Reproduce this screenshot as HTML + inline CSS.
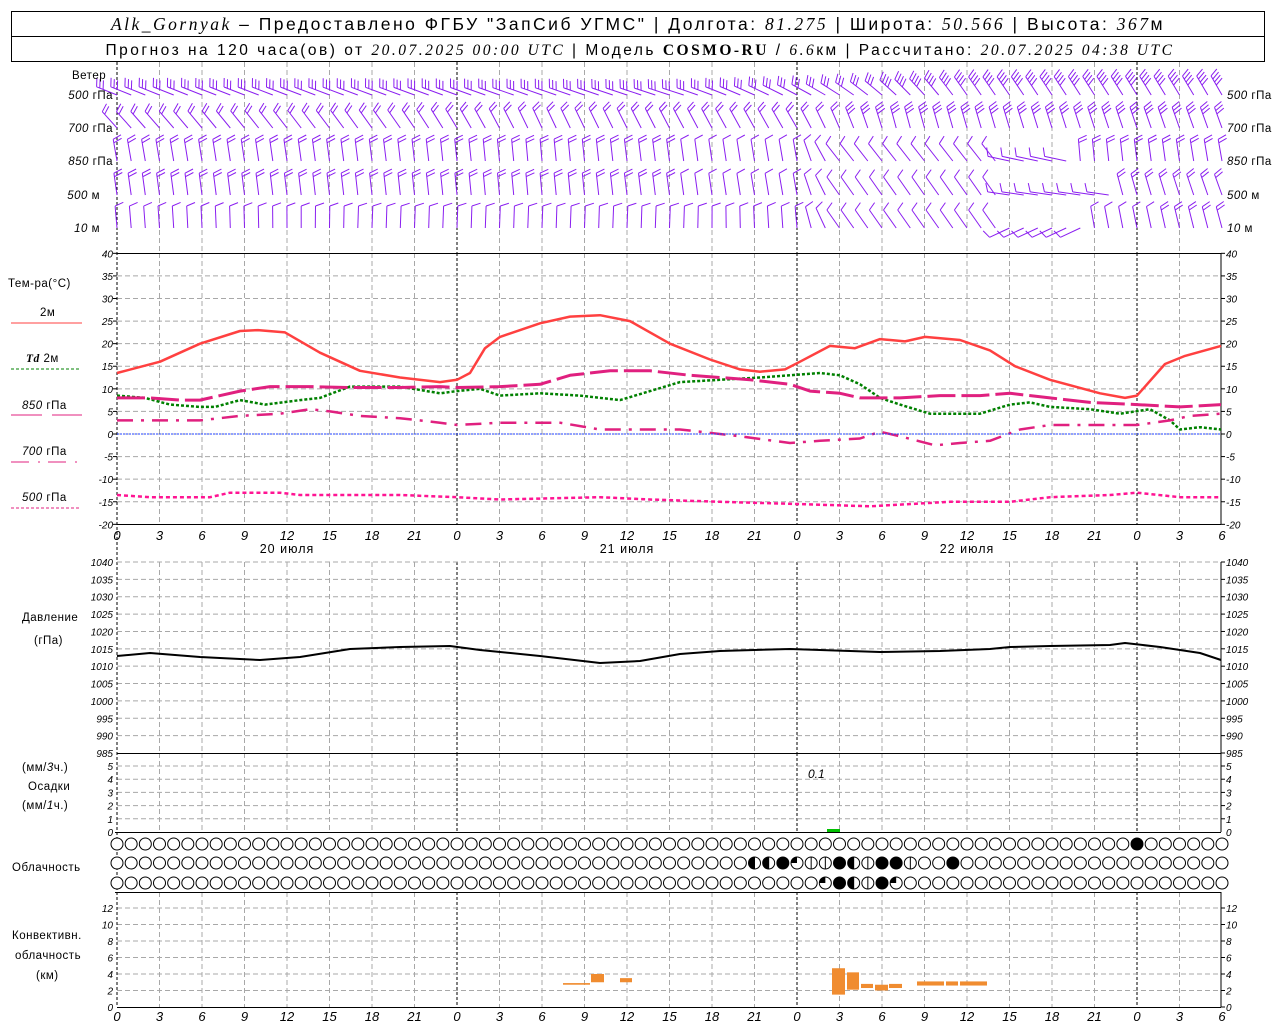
<!DOCTYPE html>
<html><head><meta charset="utf-8"><style>
html,body{margin:0;padding:0;background:#fff;width:1280px;height:1024px;overflow:hidden}
svg{display:block}
text{font-family:"Liberation Sans","DejaVu Sans",sans-serif;fill:#000}
.n{font-style:italic;font-size:10px;font-family:"Liberation Sans",sans-serif}
.l{font-size:11.5px;letter-spacing:0.5px}
</style></head><body>
<svg id="s" width="1280" height="1024" xmlns="http://www.w3.org/2000/svg">
<rect x="11.5" y="11.5" width="1253" height="50" fill="none" stroke="#000"/>
<line x1="11" y1="36.5" x2="1265" y2="36.5" stroke="#000"/>
<text x="638" y="30" text-anchor="middle" font-size="17.5" style="letter-spacing:2.5px"><tspan font-family="Liberation Serif,serif" font-style="italic">Alk_Gornyak</tspan> – Предоставлено ФГБУ "ЗапСиб УГМС" | Долгота: <tspan font-family="Liberation Serif,serif" font-style="italic">81.275</tspan> | Широта: <tspan font-family="Liberation Serif,serif" font-style="italic">50.566</tspan> | Высота: <tspan font-family="Liberation Serif,serif" font-style="italic">367</tspan>м</text>
<text x="640" y="55" text-anchor="middle" font-size="15.5" style="letter-spacing:2.5px">Прогноз на 120 часа(ов) от <tspan font-family="Liberation Serif,serif" font-style="italic">20.07.2025 00:00 UTC</tspan>  | Модель <tspan font-family="Liberation Serif,serif" font-weight="bold">COSMO-RU</tspan> / <tspan font-family="Liberation Serif,serif" font-style="italic">6.6</tspan>км | Рассчитано: <tspan font-family="Liberation Serif,serif" font-style="italic">20.07.2025 04:38 UTC</tspan></text>
<g id="g"></g>
<text x="72" y="79" class="l">Ветер</text>
<text x="113" y="99" class="l" text-anchor="end"><tspan font-style="italic">500</tspan> гПа</text>
<text x="113" y="132" class="l" text-anchor="end"><tspan font-style="italic">700</tspan> гПа</text>
<text x="113" y="165" class="l" text-anchor="end"><tspan font-style="italic">850</tspan> гПа</text>
<text x="100" y="199" class="l" text-anchor="end"><tspan font-style="italic">500</tspan> м</text>
<text x="100" y="232" class="l" text-anchor="end"><tspan font-style="italic">10</tspan>   м</text>
<text x="1227" y="99" class="l"><tspan font-style="italic">500</tspan> гПа</text>
<text x="1227" y="132" class="l"><tspan font-style="italic">700</tspan> гПа</text>
<text x="1227" y="165" class="l"><tspan font-style="italic">850</tspan> гПа</text>
<text x="1227" y="199" class="l"><tspan font-style="italic">500</tspan> м</text>
<text x="1227" y="232" class="l"><tspan font-style="italic">10</tspan>   м</text>

<text x="8" y="287" class="l">Тем-ра(°С)</text>
<text x="40" y="316" class="l">2м</text>
<line x1="11" y1="323" x2="82" y2="323" stroke="#ff4040" stroke-width="1"/>
<text x="26" y="362" class="l"><tspan font-style="italic" font-weight="bold" font-family="Liberation Serif,serif">Td</tspan>  2м</text>
<line x1="11" y1="369" x2="79" y2="369" stroke="#008000" stroke-dasharray="3,2"/>
<text x="22" y="409" class="l"><tspan font-style="italic">850</tspan> гПа</text>
<line x1="11" y1="415" x2="42" y2="415" stroke="#e0207f"/><line x1="52" y1="415" x2="82" y2="415" stroke="#e0207f"/>
<text x="22" y="455" class="l"><tspan font-style="italic">700</tspan> гПа</text>
<path d="M11 462h18M38 462h2M48 462h18M75 462h2" stroke="#e0207f"/>
<text x="22" y="501" class="l"><tspan font-style="italic">500</tspan> гПа</text>
<line x1="11" y1="508" x2="79" y2="508" stroke="#e0207f" stroke-dasharray="3,2"/>

<text x="22" y="621" class="l">Давление</text>
<text x="34" y="644" class="l">(гПа)</text>
<text x="22" y="771" class="l">(мм/<tspan font-style="italic">3</tspan>ч.)</text>
<text x="28" y="790" class="l">Осадки</text>
<text x="22" y="809" class="l">(мм/<tspan font-style="italic">1</tspan>ч.)</text>
<text x="12" y="871" class="l">Облачность</text>
<text x="12" y="939" class="l">Конвективн.</text>
<text x="15" y="959" class="l">облачность</text>
<text x="36" y="979" class="l">(км)</text>
<text x="808" y="778" font-size="12" font-style="italic">0.1</text>
</svg>
<script>
var NS="http://www.w3.org/2000/svg",G=document.getElementById("g");
function el(t,a,txt){var e=document.createElementNS(NS,t);for(var k in a)e.setAttribute(k,a[k]);if(txt!=null)e.textContent=txt;G.appendChild(e);return e;}
function X(h){return 117+h*14.1667}
function TY(t){return 434-t*4.517}
function PY(p){return 562+(1040-p)*3.4727}
function RY(v){return 832-v*13.2}
function CY(k){return 1007-k*8.25}
function vgrid(y1,y2){for(var h=3;h<78;h+=3){var day=h%24==0;el("line",{x1:X(h),y1:y1,x2:X(h),y2:y2,stroke:day?"#000":"#a8a8a8","stroke-dasharray":day?"3,2":"5,3"})}}
vgrid(62,253);vgrid(253,524);vgrid(562,753);vgrid(753,832);vgrid(892,1007);
function hgrid(y){el("line",{x1:117,y1:y,x2:1221,y2:y,stroke:"#a8a8a8","stroke-dasharray":"5,3"})}
function lab(x,y,t,anc){el("text",{x:x,y:y,"class":"n","text-anchor":anc||"start"},t)}
for(var t=-20;t<=40;t+=5){var y=TY(t);if(t<40&&t>-20)hgrid(y);lab(113,y+4,t,"end");lab(1226,y+4,t);el("line",{x1:1221,y1:y,x2:1225,y2:y,stroke:"#000"});el("line",{x1:113,y1:y,x2:117,y2:y,stroke:"#000"})}
for(var p=985;p<=1040;p+=5){var y=PY(p);if(p>985)hgrid(y);lab(113,y+4,p,"end");lab(1226,y+4,p);el("line",{x1:1221,y1:y,x2:1225,y2:y,stroke:"#000"})}
for(var v=1;v<=5;v++){var y=RY(v);hgrid(y);lab(113,y+4,v,"end");lab(1226,y+4,v);el("line",{x1:1221,y1:y,x2:1225,y2:y,stroke:"#000"})}
lab(113,836,0,"end");lab(1226,836,0);
for(var k=0;k<=12;k+=2){var y=CY(k);if(k>0)hgrid(y);lab(113,y+4,k,"end");lab(1226,y+4,k);el("line",{x1:1221,y1:y,x2:1225,y2:y,stroke:"#000"})}
el("line",{x1:117,y1:62,x2:117,y2:1007,stroke:"#000","stroke-dasharray":"3,2"});
[[253,524],[562,832],[892,1007]].forEach(function(r){el("line",{x1:1221,y1:r[0],x2:1221,y2:r[1],stroke:"#000"})});
el("line",{x1:117,y1:253.5,x2:1221,y2:253.5,stroke:"#000"});
el("line",{x1:117,y1:524.5,x2:1221,y2:524.5,stroke:"#000"});
el("line",{x1:117,y1:753.5,x2:1221,y2:753.5,stroke:"#000"});
el("line",{x1:115,y1:832.5,x2:1221,y2:832.5,stroke:"#000"});
el("line",{x1:115,y1:892.5,x2:1221,y2:892.5,stroke:"#000"});
el("line",{x1:117,y1:1007.5,x2:1221,y2:1007.5,stroke:"#000"});
el("line",{x1:117,y1:562,x2:1221,y2:562,stroke:"#a8a8a8","stroke-dasharray":"5,3"});
for(var h=0;h<=78;h+=3){var s=(h%24)+"";el("text",{x:X(h),y:540,"text-anchor":"middle","font-size":"13","font-style":"italic"},s);el("text",{x:X(h),y:1021,"text-anchor":"middle","font-size":"13","font-style":"italic"},s)}
[["20 июля",12],["21 июля",36],["22 июля",60]].forEach(function(d){el("text",{x:X(d[1]),y:553,"text-anchor":"middle","font-size":"12.5","style":"letter-spacing:1px"},d[0])});
function curve(pts,f,attr){var d="";pts.forEach(function(p,i){d+=(i?"L":"M")+p[0]+" "+f(p[1]).toFixed(1)});attr.d=d;attr.fill="none";attr["stroke-linejoin"]="round";el("path",attr)}
var T2=[[117,13.5],[160,16],[200,20],[240,22.8],[258,23],[285,22.5],[320,18],[360,14],[400,12.5],[440,11.5],[457,12],[470,13.5],[485,19],[500,21.5],[540,24.5],[570,26],[600,26.3],[630,25],[670,20],[710,16.5],[740,14.3],[760,13.8],[785,14.3],[800,16],[830,19.5],[855,19],[880,21],[905,20.5],[925,21.5],[960,20.8],[990,18.5],[1015,15],[1050,12],[1100,9],[1125,8],[1137,8.5],[1165,15.5],[1185,17.3],[1221,19.5]];
curve(T2,TY,{stroke:"#ff4040","stroke-width":"2.5"});
var TD=[[117,8.5],[145,8],[170,6.5],[200,6],[215,6],[240,7.5],[265,6.5],[300,7.5],[320,8],[350,10.5],[400,10.5],[440,9],[457,9.5],[480,10],[500,8.5],[540,9],[580,8.5],[620,7.5],[650,9.5],[680,11.5],[720,12],[760,12.5],[790,13],[820,13.5],[840,13],[860,11],[880,8],[900,6.5],[930,4.5],[980,4.5],[1010,6.5],[1030,7],[1050,6],[1090,5.5],[1120,4.5],[1150,5.5],[1170,3],[1180,1],[1200,1.5],[1221,1]];
curve(TD,TY,{stroke:"#008000","stroke-width":"2.5","stroke-dasharray":"3,2"});
var P85=[[117,8],[150,8],[180,7.5],[200,7.5],[240,9.5],[270,10.5],[310,10.5],[350,10.3],[400,10.3],[440,10.5],[457,10.3],[500,10.5],[540,11],[570,13],[610,14],[650,14],[690,13],[720,12.5],[750,12],[790,11],[810,9.5],[840,9],[860,8],[900,8],[940,8.5],[980,8.5],[1010,9],[1050,8],[1090,7],[1137,6.5],[1180,6],[1221,6.5]];
curve(P85,TY,{stroke:"#e0207f","stroke-width":"3","stroke-dasharray":"28,6"});
var P70=[[117,3],[160,3],[200,3],[240,4],[280,4.5],[310,5.5],[330,5],[360,4],[400,3.5],[440,2.5],[457,2],[500,2.5],[560,2.5],[600,1],[640,1],[680,1],[700,0.5],[740,-0.5],[790,-2],[820,-1.5],[860,-1],[880,0.5],[900,-0.5],[935,-2.5],[960,-2],[990,-1.5],[1020,1],[1050,2],[1137,2],[1170,3],[1190,4],[1221,4.5]];
curve(P70,TY,{stroke:"#e0207f","stroke-width":"2.5","stroke-dasharray":"16,8,3,8"});
var P50=[[117,-13.5],[150,-14],[210,-14],[230,-13],[280,-13],[300,-13.5],[400,-13.5],[457,-14],[500,-14.5],[600,-14],[650,-14.5],[720,-15],[797,-15.5],[870,-16],[950,-15],[1010,-15],[1050,-14],[1110,-13.5],[1137,-13],[1180,-14],[1221,-14]];
curve(P50,TY,{stroke:"#ff1493","stroke-width":"2.5","stroke-dasharray":"4,3"});
el("line",{x1:117,y1:TY(0),x2:1221,y2:TY(0),stroke:"#2040ff","stroke-width":"1","stroke-dasharray":"2,1"});
var PR=[[117,656],[150,653],[200,657],[260,660],[300,657],[350,649],[400,647],[450,646],[480,650],[540,656],[600,663],[640,661],[680,654],[720,651],[790,649],[850,651],[880,652],[940,651],[990,649],[1010,647],[1050,646],[1110,645],[1125,643],[1160,647],[1200,653],[1221,660]];
curve(PR,function(v){return v},{stroke:"#000","stroke-width":"2"});
el("rect",{x:827,y:829,width:13,height:3,fill:"#00c000"});
[[563,591,2.7,2.9],[591,605,3.0,4.0],[620,633,3.0,3.5],[832,846,1.5,4.7],[847,860,2.1,4.2],[861,874,2.3,2.8],[875,889,2.0,2.7],[889,903,2.3,2.8],[917,945,2.6,3.1],[946,959,2.6,3.1],[960,988,2.6,3.1]].forEach(function(b){el("rect",{x:b[0],y:CY(b[3]),width:b[1]-b[0]-1,height:CY(b[2])-CY(b[3]),fill:"#f08c30"})});
var rows=[844,863,883],sp={};
sp["0_72"]="f";
[[45,"h"],[46,"h"],[47,"f"],[48,"q"],[49,"v"],[50,"v"],[51,"f"],[52,"h"],[53,"v"],[54,"f"],[55,"f"],[56,"v"],[59,"f"]].forEach(function(a){sp["1_"+a[0]]=a[1]});
[[50,"q"],[51,"f"],[52,"h"],[53,"v"],[54,"f"],[55,"q"]].forEach(function(a){sp["2_"+a[0]]=a[1]});
for(var r=0;r<3;r++)for(var h=0;h<=78;h++){var cx=X(h),cy=rows[r],t=sp[r+"_"+h],R=6;
el("circle",{cx:cx,cy:cy,r:R,fill:t=="f"?"#000":"#fff",stroke:"#000"});
if(t=="h")el("path",{d:"M"+cx+" "+(cy-R)+"A"+R+" "+R+" 0 0 0 "+cx+" "+(cy+R)+"Z",fill:"#000"});
if(t=="h"||t=="v")el("line",{x1:cx,y1:cy-R,x2:cx,y2:cy+R,stroke:"#000"});
if(t=="q")el("path",{d:"M"+cx+" "+cy+"V"+(cy-R)+"A"+R+" "+R+" 0 0 0 "+(cx-R)+" "+cy+"Z",fill:"#000"});
}
function interp(k,h){for(var i=0;i<k.length-1;i++)if(h<=k[i+1][0]){var a=k[i],b=k[i+1],f=(h-a[0])/(b[0]-a[0]||1);return [a[1]+(b[1]-a[1])*f,Math.round(a[2]+(b[2]-a[2])*f)]}return [k[k.length-1][1],k[k.length-1][2]]}
var WR=[[95,[[0,292,3],[24,290,3],[40,288,3],[50,300,3],[60,325,4],[78,330,4]]],
[128,[[0,318,2],[20,325,2],[30,335,2],[48,330,2],[55,345,3],[78,340,3]]],
[161,[[0,350,2],[30,355,2],[48,350,1],[51,322,1],[62,322,1],[63,282,1],[67,282,1],[68,355,2],[78,350,2]]],
[195,[[0,352,2],[30,355,2],[48,350,1],[51,325,1],[62,325,1],[63,278,1],[70,278,1],[71,345,2],[78,340,2]]],
[228,[[0,355,1],[18,362,1],[40,362,1],[48,355,1],[51,325,1],[62,325,1],[63,245,1],[68,245,1],[69,350,1],[78,345,2]]]];
var d2r=Math.PI/180;
WR.forEach(function(w){var by=w[0];for(var h=0;h<=78;h++){var v=interp(w[1],h),a=v[0]*d2r,n=v[1],L=22,bx=X(h);
var dx=Math.sin(a),dy=-Math.cos(a),tx=bx+dx*L,ty=by+dy*L,ph=70*d2r,ux=dx*Math.cos(ph)-dy*Math.sin(ph),uy=dx*Math.sin(ph)+dy*Math.cos(ph);
var d="M"+bx.toFixed(1)+" "+by+"L"+tx.toFixed(1)+" "+ty.toFixed(1);
for(var i=0;i<n;i++){var sx=tx-dx*i*3.5,sy=ty-dy*i*3.5;d+="M"+sx.toFixed(1)+" "+sy.toFixed(1)+"l"+(ux*9).toFixed(1)+" "+(uy*9).toFixed(1)}
el("path",{d:d,stroke:"#8a1ef0","stroke-width":"1",fill:"none"})}});
</script>
</body></html>
